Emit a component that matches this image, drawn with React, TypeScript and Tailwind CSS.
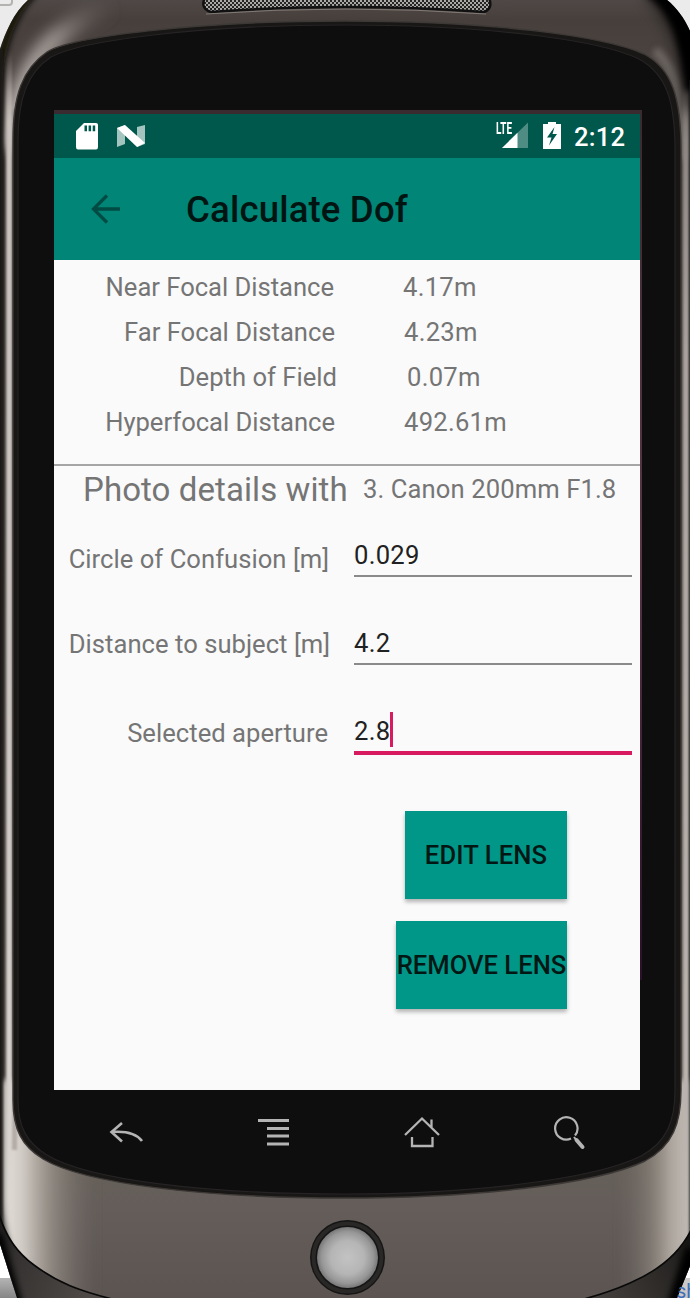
import React from "react";

const results = [
  { label: "Near Focal Distance", value: "4.17m", labelBox: "w-[280px]", gap: "ml-[69px]", track: "tracking-[-0.02px]" },
  { label: "Far Focal Distance", value: "4.23m", labelBox: "w-[281px]", gap: "ml-[69px]", track: "tracking-[0.02px]" },
  { label: "Depth of Field", value: "0.07m", labelBox: "w-[283px]", gap: "ml-[70px]", track: "tracking-[0.02px]" },
  { label: "Hyperfocal Distance", value: "492.61m", labelBox: "w-[281px]", gap: "ml-[69px]", track: "tracking-[-0.02px]" },
];

function PhoneBody() {
  return (
    <svg className="absolute inset-0" width="690" height="1298" viewBox="0 0 690 1298">
      <defs>
        <linearGradient id="metal" x1="0" y1="0" x2="0" y2="1">
          <stop offset="0" stopColor="#4f4846" />
          <stop offset="0.015" stopColor="#463f3c" />
          <stop offset="0.05" stopColor="#4a4340" />
          <stop offset="0.9" stopColor="#666059" />
          <stop offset="0.93" stopColor="#645d5a" />
          <stop offset="1" stopColor="#5b5451" />
        </linearGradient>
        <linearGradient id="edgeLight" gradientUnits="userSpaceOnUse" x1="0" y1="50" x2="0" y2="1260">
          <stop offset="0" stopColor="#b5aea9" stopOpacity="0" />
          <stop offset="0.06" stopColor="#c9c2bd" />
          <stop offset="0.5" stopColor="#ccc5c2" />
          <stop offset="0.88" stopColor="#d9d4cf" />
          <stop offset="0.95" stopColor="#d9d4cf" stopOpacity="0.2" />
          <stop offset="1" stopColor="#d9d4cf" stopOpacity="0" />
        </linearGradient>
        <linearGradient id="edgeLightRight" gradientUnits="userSpaceOnUse" x1="0" y1="70" x2="0" y2="1230">
          <stop offset="0" stopColor="#8c8581" stopOpacity="0" />
          <stop offset="0.06" stopColor="#8c8581" />
          <stop offset="0.25" stopColor="#aaa29e" />
          <stop offset="0.88" stopColor="#b9b2ae" />
          <stop offset="0.95" stopColor="#b9b2ae" stopOpacity="0.2" />
          <stop offset="1" stopColor="#b9b2ae" stopOpacity="0" />
        </linearGradient>
        <linearGradient id="shoulder" gradientUnits="userSpaceOnUse" x1="20" y1="100" x2="110" y2="-5">
          <stop offset="0" stopColor="#bab3ae" />
          <stop offset="0.5" stopColor="#968f8b" />
          <stop offset="1" stopColor="#5e5754" stopOpacity="0" />
        </linearGradient>
        <linearGradient id="chin" gradientUnits="userSpaceOnUse" x1="10" y1="0" x2="100" y2="0">
          <stop offset="0" stopColor="#ded9d3" />
          <stop offset="0.15" stopColor="#cfc9c3" />
          <stop offset="0.45" stopColor="#9c958d" stopOpacity="0.8" />
          <stop offset="1" stopColor="#6a635e" stopOpacity="0" />
        </linearGradient>
        <linearGradient id="chinRight" gradientUnits="userSpaceOnUse" x1="684" y1="0" x2="615" y2="0">
          <stop offset="0" stopColor="#bdb6b0" />
          <stop offset="0.2" stopColor="#aca59d" />
          <stop offset="0.5" stopColor="#89827a" stopOpacity="0.7" />
          <stop offset="1" stopColor="#6a635e" stopOpacity="0" />
        </linearGradient>
        <linearGradient id="lip" x1="0" y1="0" x2="1" y2="0.4">
          <stop offset="0" stopColor="#151414" />
          <stop offset="0.3" stopColor="#343130" />
          <stop offset="1" stopColor="#504b48" />
        </linearGradient>
        <linearGradient id="lipRight" x1="1" y1="0" x2="0" y2="0.4">
          <stop offset="0" stopColor="#0b0a0a" />
          <stop offset="0.3" stopColor="#252321" />
          <stop offset="1" stopColor="#423e3b" />
        </linearGradient>
        <linearGradient id="footer" x1="0" y1="0" x2="0" y2="1">
          <stop offset="0" stopColor="#b4b4b4" />
          <stop offset="1" stopColor="#868686" />
        </linearGradient>
        <radialGradient id="ball">
          <stop offset="0" stopColor="#c3c3c3" />
          <stop offset="0.55" stopColor="#b5b5b5" />
          <stop offset="0.85" stopColor="#969696" />
          <stop offset="1" stopColor="#777" />
        </radialGradient>
        <pattern id="mesh" width="4" height="4" patternUnits="userSpaceOnUse">
          <rect width="4" height="4" fill="#252525" />
          <rect width="2" height="2" fill="#aaa9a5" />
          <rect x="2" y="2" width="2" height="2" fill="#aaa9a5" />
        </pattern>
        <filter id="soft1" x="-60" y="-60" width="810" height="1420" filterUnits="userSpaceOnUse"><feGaussianBlur stdDeviation="1.2" /></filter>
        <filter id="soft3" x="-60" y="-60" width="810" height="1420" filterUnits="userSpaceOnUse"><feGaussianBlur stdDeviation="3" /></filter>
        <filter id="soft7" x="-60" y="-60" width="810" height="1420" filterUnits="userSpaceOnUse"><feGaussianBlur stdDeviation="7" /></filter>
        <clipPath id="body">
          <path d="M28 0 C14 12 5 33 0 49 V1244 L17 1298 H677 L690 1266 V31 C684 18 677 8 667 0 Z" />
        </clipPath>
      </defs>
      <rect width="690" height="1298" fill="#fff" />
      <rect width="690" height="110" fill="#ebebeb" />
      <rect x="-8" y="-12" width="20" height="17" rx="3" fill="none" stroke="#b5b3b0" strokeWidth="2" />
      <rect y="1278" width="30" height="20" fill="url(#footer)" />
      <rect x="672" y="1278" width="18" height="20" fill="#c9c9c9" />
      <g clipPath="url(#body)">
        <rect width="690" height="1298" fill="url(#metal)" />
        <g fill="none">
          <path d="M110 5 C50 30 20 65 9 150" stroke="url(#shoulder)" strokeWidth="20" filter="url(#soft7)" />
          <path d="M655 50 C676 70 682 95 685 160" stroke="#77716c" strokeWidth="9" filter="url(#soft3)" opacity="0.8" />
          <path d="M-10 1080 H18 C20 1130 30 1150 60 1160 L125 1180 V1310 H-10 Z" fill="url(#chin)" filter="url(#soft3)" />
          <path d="M700 1080 H675 C670 1130 660 1150 630 1165 L600 1175 V1310 H700 Z" fill="url(#chinRight)" filter="url(#soft3)" />
          <path d="M14 110 V1150" stroke="#6d6561" strokeWidth="6" opacity="0.35" filter="url(#soft1)" />
          <path d="M9 40 V1250" stroke="url(#edgeLight)" strokeWidth="6" filter="url(#soft1)" />
          <path d="M686 60 V1235" stroke="url(#edgeLightRight)" strokeWidth="6" filter="url(#soft1)" />
          <path d="M38 -12 C14 10 0 42 -2 90 V1195 C-2 1220 1 1232 5 1245" stroke="#080706" strokeWidth="8" filter="url(#soft3)" />
          <path d="M0 49 V1240" stroke="#1a1716" strokeWidth="5" filter="url(#soft1)" />
          <path d="M652 -16 C681 4 691 34 697 90" stroke="#030303" strokeWidth="24" filter="url(#soft3)" />
          <path d="M650 -10 C676 12 690 50 692 110" stroke="#050505" strokeWidth="18" opacity="0.5" filter="url(#soft7)" />
          <path d="M692 80 V1235" stroke="#15110f" strokeWidth="5" filter="url(#soft1)" />
        </g>
        <path d="M-2 1210 C4 1234 16 1252 34 1265 C58 1283 80 1291 112 1299 L112 1320 H-5 Z" fill="url(#lip)" stroke="#090909" strokeWidth="1.600" />
        <path d="M692 1228 C681 1252 660 1270 630 1283 Q610 1292 584 1299 L584 1320 H700 V1228 Z" fill="url(#lipRight)" stroke="#090909" strokeWidth="1.600" />
        <path d="M-3 1234 L18 1306" stroke="#050505" strokeWidth="10" filter="url(#soft3)" />
        <path d="M696 1250 L678 1306" stroke="#020202" strokeWidth="22" filter="url(#soft3)" />
      </g>
      <path
        d="M13 140 C13 96 22 69 47 52 C70 37 195 21 345 21 C485 21 602 35 644 54 C672 69 681 97 681 150 V1090 C681 1123 673 1146 645 1161 C595 1185 470 1198 345 1198 C205 1198 85 1184 43 1159 C22 1146 13 1130 13 1100 Z"
        fill="#191716" stroke="#3d3937" strokeWidth="1.400"
      />
      <path
        d="M18 140 C18 98 28 72 51 57 C80 41 197 25 345 25 C483 25 597 39 639 59 C666 74 675 100 675 150 V1090 C675 1121 667 1142 641 1156 C593 1180 468 1194 345 1194 C207 1194 88 1180 47 1155 C27 1143 18 1127 18 1100 Z"
        fill="#0e0e0e" stroke="#262324" strokeWidth="1.200"
      />
      <path d="M207 -6 H487 Q495 8 484 12 Q416 7 346 7 Q276 7 211 12 Q198 8 207 -6Z" fill="url(#mesh)" stroke="#111" strokeWidth="2.500" />
      <path d="M206 14 Q276 9 346 9 Q416 9 486 14" fill="none" stroke="#827b76" strokeWidth="1" />
      <circle cx="347.5" cy="1257.5" r="37.5" fill="#151515" />
      <circle cx="347.5" cy="1257.5" r="34" fill="none" stroke="#292827" strokeWidth="4" />
      <circle cx="347.5" cy="1257.5" r="30.5" fill="url(#ball)" />
    </svg>
  );
}

function StatusBar() {
  return (
    <div className="flex h-[44px] items-center bg-[#00574b] text-white">
      <svg className="ml-[22px]" width="22" height="28" viewBox="0 0 22 28">
        <path d="M8 1 H20 Q22 1 22 3 V25 Q22 27.500 20 27.500 H2 Q0 27.500 0 25 V9 Z" fill="#fff" />
        <path d="M8.500 3.500 h2.500 v5.800 h-2.500z M12.600 3.500 h2.500 v5.800 h-2.500z M16.700 3.500 h2.500 v5.800 h-2.500z" fill="#00574b" />
      </svg>
      <svg className="ml-[19px]" width="28" height="24" viewBox="0 0 28 24">
        <path d="M0 4 L8 1 V20 L0 23 Z M20 3 L28 1 V20 L20 23 Z" fill="#a3c4bf" />
        <path d="M0 4 L8 1 L28 19 L20 23 Z" fill="#fff" />
      </svg>
      <div className="relative ml-[351px] h-[28px] w-[34px]">
        <svg className="absolute inset-0" width="34" height="28" viewBox="0 0 34 28">
          <path d="M6 26 L32 0.500 V26Z" fill="#4f8c83" />
          <path d="M6 26 L21.500 10.800 V26Z" fill="#fff" />
        </svg>
        <span className="absolute left-0 top-0 origin-left scale-x-[0.62] text-[16px] font-bold leading-[14px]">LTE</span>
      </div>
      <svg className="mb-[2px] ml-[13px]" width="18" height="28" viewBox="0 0 18 28">
        <path d="M5 1 H13 V3 H18 V28 H0 V3 H5 Z" fill="#fff" />
        <path d="M11.500 6 L4 16.500 H8.500 L6 24.500 L14 13 H9.500 Z" fill="#00574b" />
      </svg>
      <span className="ml-[13px] whitespace-nowrap pt-[1px] text-[25.600px] font-medium leading-[30px] tracking-[0.2px]">2:12</span>
    </div>
  );
}

function Field({ label, value, labelBox, labelPad, rowClass, active = false }: {
  label: string; value: string; labelBox: string; labelPad: string; rowClass: string; active?: boolean;
}) {
  return (
    <div className={`flex ${rowClass}`}>
      <div className={`${labelBox} ${labelPad} shrink-0 whitespace-nowrap text-right tracking-[0.03px] text-[#757575]`}>{label}</div>
      <div className="ml-auto mr-[8px] w-[278px] text-[#212121]">
        <div className="flex h-[36px] items-center">
          <span className="tracking-[0.25px]">{value}</span>
          {active && <i className="-mt-[3px] h-[35px] w-[3px] bg-[#d81b60]" />}
        </div>
        <div className={active ? "mt-[2px] h-[4px] bg-[#d81b60]" : "mt-[2px] h-[2px] bg-[#8a8a8a]"} />
      </div>
    </div>
  );
}

function SystemKeys() {
  return (
    <div className="flex h-[84px] pt-[23px] text-[#b4b4b4]">
      <svg className="ml-[54px]" width="36" height="40" viewBox="0 0 36 40" fill="none" stroke="currentColor" strokeWidth="2.600">
        <path d="M14 10 L3.500 19 L14 28.500 M4 19 C18 18 28 20 34 28" />
      </svg>
      <svg className="ml-[114px]" width="34" height="40" viewBox="0 0 34 40" fill="currentColor">
        <path d="M0 6h31v3H0zM9 14h22v3H9zM9 21.500h22v3H9zM9 29.500h22v3H9z" />
      </svg>
      <svg className="ml-[112px]" width="36" height="40" viewBox="0 0 36 40" fill="none" stroke="currentColor" strokeWidth="2.300">
        <path d="M1 22 L18 5.500 L35 22 M27.500 14 V6.500 M8 24 V33 H28.500 V24" />
      </svg>
      <svg className="ml-[114px]" width="34" height="40" viewBox="0 0 34 40" fill="none" stroke="currentColor">
        <path d="M17 25.600 A11.200 11.200 0 1 1 21 22.500" strokeWidth="2.200" />
        <path d="M20 24 L23 28" strokeWidth="2" />
        <path d="M22.500 27 L28.500 34" strokeWidth="4" strokeLinecap="round" />
      </svg>
    </div>
  );
}

export default function App() {
  return (
    <main className="relative h-[1298px] w-[690px] overflow-hidden font-['Roboto',sans-serif] text-[25.600px] leading-[30px]">
      <PhoneBody />
      <span className="absolute left-[676px] top-[1278px] w-[14px] overflow-hidden text-[20px] leading-[26px] text-[#416cb7] [clip-path:polygon(6px_0,14px_0,14px_20px,1px_20px)]">sh</span>
      <div className="relative ml-[54px] w-[586px] pt-[110px]">
        <section className="relative h-[980px] bg-[#fafafa]">
          <div className="h-[4px] bg-[#392b30]" />
          <StatusBar />
          <header className="flex h-[102px] items-center bg-[#008577]">
            <svg className="ml-[37px]" width="30" height="30" viewBox="0 0 30 30" fill="none" stroke="#004c44" strokeWidth="3.300">
              <path d="M16 1.500 L2.500 15 L16 28.500 M2.500 15 H29" />
            </svg>
            <h1 className="ml-[65px] whitespace-nowrap pt-[2px] text-[36.600px] font-medium leading-[44px] tracking-[0.16px] text-[#001411]">Calculate Dof</h1>
          </header>
          <div className="h-[204px] pt-[12px] text-[#757575]">
            {results.map((r) => (
              <div key={r.label} className="flex h-[45.100px] whitespace-nowrap">
                <span className={`${r.labelBox} ${r.track} text-right`}>{r.label}</span>
                <span className={`${r.gap} tracking-[0.25px]`}>{r.value}</span>
              </div>
            ))}
          </div>
          <div className="h-[2px] bg-[#a6a6a6]" />
          <div className="flex h-[74px] whitespace-nowrap pt-[4px] text-[#757575]">
            <span className="ml-[29px] w-[265px] pt-[1px] text-[33px] leading-[38px] tracking-[0.08px]">Photo details with</span>
            <span className="ml-[15px] leading-[38px] tracking-[0.1px]">3. Canon 200mm F1.8</span>
          </div>
          <Field label="Circle of Confusion [m]" value="0.029" labelBox="w-[275px]" labelPad="pt-[7px]" rowClass="h-[88px] -mt-[3px]" />
          <Field label="Distance to subject [m]" value="4.2" labelBox="w-[276px]" labelPad="pt-[4px]" rowClass="h-[88px]" />
          <Field label="Selected aperture" value="2.8" labelBox="w-[274px]" labelPad="pt-[5px]" rowClass="h-[98px]" active />
          <div className="-mt-[0.500px] mr-[73px] flex flex-col items-end gap-[22px] font-medium text-[#001714]">
            <button className="h-[88px] w-[162px] whitespace-nowrap bg-[#009688] tracking-[0.1px] shadow-[0_3px_4px_rgba(0,0,0,0.28)]">EDIT LENS</button>
            <button className="flex h-[88px] w-[171px] items-center justify-center whitespace-nowrap bg-[#009688] shadow-[0_3px_4px_rgba(0,0,0,0.28)]">REMOVE LENS</button>
          </div>
          <div className="absolute -right-[2px] top-0 h-[870px] w-[2px] bg-gradient-to-b from-[#392b30] via-[#593445] to-[#2a1028]" />
        </section>
        <SystemKeys />
      </div>
    </main>
  );
}
